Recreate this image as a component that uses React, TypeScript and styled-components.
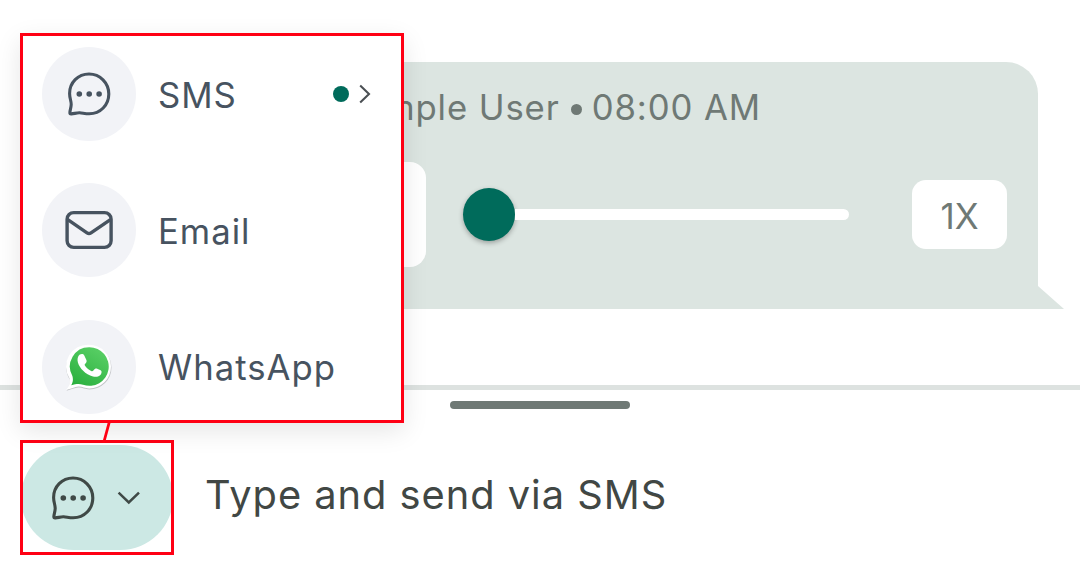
import styled, { createGlobalStyle } from "styled-components";

const colors = {
	primary: "#006b5b",
	bubble: "#dce5e1",
	muted: "#6f7975",
	text: "#3f4946",
	menuText: "#475360",
	iconBg: "#f2f3f7",
	pill: "#cce8e4",
	outline: "#ff0014",
};

const ChatIcon = ({ color }: { color: string }) => (
	<svg width="48" height="48" viewBox="0 0 48 48" fill="none">
		<path
			d="M24 4C13 4 4.6 12.6 4.6 23.5C4.6 28.3 6.3 31 6.2 34.5C6.1 37.2 5.2 39.8 4.9 42.2C4.7 43.6 5.1 44 6.4 43.9C9.4 43.6 11.8 42.7 14.6 42.8C17.8 43 20 43.8 24.2 43.8C35.4 43.8 43.8 35 43.8 24C43.8 12.8 35 4 24 4Z"
			stroke={color}
			strokeWidth="3.1"
			strokeLinejoin="round"
		/>
		<circle cx="14.3" cy="24" r="2.8" fill={color} />
		<circle cx="24.2" cy="24" r="2.8" fill={color} />
		<circle cx="34.1" cy="24" r="2.8" fill={color} />
	</svg>
);

const MailIcon = ({ color }: { color: string }) => (
	<svg width="48" height="40" viewBox="0 0 48 40" fill="none" stroke={color} strokeWidth="3.4">
		<rect x="2.1" y="2.6" width="44" height="34.8" rx="6.6" />
		<path d="M2.8 9.6L22 22.8Q24 24.2 26 22.8L45.4 9.6" strokeLinejoin="round" />
	</svg>
);

const WhatsAppIcon = () => (
	<svg width="48" height="50" viewBox="0 0 48 50">
		<defs>
			<linearGradient id="wa" x1="0.8" y1="0" x2="0.2" y2="1">
				<stop offset="0" stopColor="#5ad066" />
				<stop offset="1" stopColor="#2bb03f" />
			</linearGradient>
		</defs>
		<path
			d="M24.5 3.8A22 21.8 0 0 1 24.5 47.4C20 47.4 17 45.4 13.5 45.6C9.5 45.9 6 47.8 1.5 48.8C4.8 45 5.2 42 4.8 37.5A22 21.8 0 0 1 24.5 3.8Z"
			fill="#c3c5c8"
		/>
		<path
			d="M24.2 2.8A21.8 21.8 0 0 1 24.2 46.4C20 46.4 17 44.4 13.5 44.6C9.5 44.9 6 47 1 47.8C4.6 44.2 5 41.5 4.6 36.5A21.8 21.8 0 0 1 24.2 2.8Z"
			fill="#fff"
		/>
		<path
			d="M24.4 5.2A19.3 19.3 0 1 1 18 42.7C14.5 41.6 11 41.8 6.2 43.2C8.2 40 8.2 37 7.4 34A19.3 19.3 0 0 1 24.4 5.2Z"
			fill="url(#wa)"
		/>
		<path
			d="M14.8 12.6C16.4 11.6 18.4 11.8 19.3 13.4L21.4 18C22 19.4 21.4 20.6 20.2 21.8C19.4 22.6 19.6 23.3 20.4 24.3C22 26.4 23.9 28 26.2 29C27.2 29.4 27.8 29.2 28.6 28.2C29.7 26.8 30.8 26.1 32.2 26.7L35.6 28.3C37 29.1 36.8 31 35.8 32.4C34.2 34.6 31 35.3 28 34.4C20.4 32.2 14.6 26.2 12.9 20.4C12.1 17.6 12.6 14.2 14.8 12.6Z"
			fill="#fff"
		/>
	</svg>
);

const menuItems = [
	{ label: "SMS", icon: <ChatIcon color={colors.menuText} />, selected: true },
	{ label: "Email", icon: <MailIcon color={colors.menuText} /> },
	{ label: "WhatsApp", icon: <WhatsAppIcon /> },
];

export default function App() {
	return (
		<>
			<GlobalStyle />
			<Screen>
				<Conversation>
					<Bubble>
						<BubbleHeader>
							<span>Sample User</span>
							<Separator />
							<span>08:00 AM</span>
						</BubbleHeader>
						<Player>
							<PlayButton aria-label="Play" />
							<Slider>
								<Thumb />
								<Track />
							</Slider>
							<Speed>1X</Speed>
						</Player>
					</Bubble>
					<BubbleTail width="26" height="23" viewBox="0 0 26 23">
						<path d="M0 0L26 23H0Z" fill={colors.bubble} />
					</BubbleTail>
				</Conversation>
				<Composer>
					<Handle />
					<ComposerRow>
						<ChannelFrame>
							<ChannelPill>
								<ChatIcon color={colors.text} />
								<svg width="24" height="14" viewBox="0 0 24 14" fill="none">
									<path d="M1.6 1.6L11.8 11.4L22 1.6" stroke={colors.text} strokeWidth="2.5" />
								</svg>
							</ChannelPill>
						</ChannelFrame>
						<Placeholder>Type and send via SMS</Placeholder>
					</ComposerRow>
				</Composer>
				<Menu>
					{menuItems.map((item) => (
						<MenuItem key={item.label}>
							<IconCircle>{item.icon}</IconCircle>
							<MenuLabel>{item.label}</MenuLabel>
							{item.selected && (
								<Selected>
									<Dot />
									<svg width="12" height="20" viewBox="0 0 12 20" fill="none">
										<path d="M1.2 1.5L10 10L1.2 18.5" stroke="#4b5054" strokeWidth="2.1" />
									</svg>
								</Selected>
							)}
						</MenuItem>
					))}
				</Menu>
				<Connector width="12" height="22" viewBox="0 0 12 22">
					<path d="M7.6 0L1.6 22" stroke={colors.outline} strokeWidth="2.8" />
				</Connector>
			</Screen>
		</>
	);
}

const GlobalStyle = createGlobalStyle`
  * {
    box-sizing: border-box;
  }
  body {
    margin: 0;
    background: #fff;
    font-family: Inter, "Liberation Sans", sans-serif;
  }
  svg {
    display: block;
    flex-shrink: 0;
  }
`;

const Screen = styled.main`
  position: relative;
  display: flex;
  flex-direction: column;
  width: 1080px;
  height: 570px;
  overflow: hidden;
`;

const Conversation = styled.section`
  display: flex;
  align-items: flex-end;
  justify-content: flex-end;
  height: 309px;
  padding-right: 16px;
`;

const Bubble = styled.div`
  width: 838px;
  height: 247px;
  padding: 23px 31px 0;
  border-radius: 32px 32px 0 32px;
  background: ${colors.bubble};
`;

const BubbleTail = styled.svg`
  width: 26px;
  height: 23px;
`;

const BubbleHeader = styled.div`
  display: flex;
  align-items: center;
  justify-content: flex-end;
  height: 43px;
  padding-right: 246px;
  font-size: 34.7px;
  letter-spacing: 0.9px;
  white-space: nowrap;
  color: ${colors.muted};
`;

const Separator = styled.span`
  width: 11px;
  height: 11px;
  margin: 6px 10px 0 11px;
  border-radius: 50%;
  background: ${colors.muted};
`;

const Player = styled.div`
  display: flex;
  align-items: center;
  justify-content: flex-end;
  height: 105px;
  margin-top: 34px;
`;

const PlayButton = styled.div`
  width: 105px;
  height: 105px;
  border-radius: 16px;
  background: #fff;
`;

const Slider = styled.div`
  display: flex;
  align-items: center;
  width: 386px;
  margin: 0 63px 0 37px;
`;

const Thumb = styled.div`
  width: 52px;
  height: 53px;
  flex-shrink: 0;
  border-radius: 50%;
  background: ${colors.primary};
  box-shadow: 0 2px 5px rgba(0, 0, 0, 0.3);
`;

const Track = styled.div`
  flex: 1;
  height: 11px;
  border-radius: 0 6px 6px 0;
  background: #fff;
`;

const Speed = styled.div`
  display: flex;
  align-items: center;
  justify-content: center;
  width: 95px;
  height: 69px;
  padding-top: 2px;
  border-radius: 14px;
  background: #fff;
  color: ${colors.muted};
  font-size: 35px;
`;

const Composer = styled.section`
  display: flex;
  flex-direction: column;
  align-items: center;
  margin-top: 76px;
  padding-top: 11px;
  border-top: 5px solid #dde2e0;
`;

const Handle = styled.div`
  width: 180px;
  height: 8px;
  border-radius: 4px;
  background: ${colors.muted};
`;

const ComposerRow = styled.div`
  display: flex;
  align-items: center;
  width: 100%;
  height: 115px;
  margin-top: 31px;
  padding-left: 20px;
`;

const ChannelFrame = styled.div`
  display: flex;
  align-items: center;
  justify-content: center;
  width: 154px;
  height: 115px;
  border: 3px solid ${colors.outline};
  background: #fff;
  overflow: hidden;
`;

const ChannelPill = styled.div`
  display: flex;
  align-items: center;
  gap: 20px;
  width: 152px;
  height: 105px;
  flex-shrink: 0;
  padding-left: 28px;
  border-radius: 53px;
  background: ${colors.pill};
`;

const Placeholder = styled.span`
  padding: 0 0 7px 31px;
  font-size: 39.8px;
  letter-spacing: 0.98px;
  white-space: nowrap;
  color: #414744;
`;

const Menu = styled.div`
  position: absolute;
  top: 33px;
  left: 20px;
  display: flex;
  flex-direction: column;
  gap: 42.4px;
  width: 384px;
  height: 390px;
  padding: 11px 19px 0;
  border: 3px solid ${colors.outline};
  background: #fff;
  box-shadow: 0 8px 24px rgba(0, 0, 0, 0.1);
`;

const MenuItem = styled.div`
  display: flex;
  align-items: center;
  height: 94px;
`;

const IconCircle = styled.div`
  display: flex;
  align-items: center;
  justify-content: center;
  width: 94px;
  height: 94px;
  border-radius: 50%;
  background: ${colors.iconBg};
`;

const MenuLabel = styled.span`
  flex: 1;
  margin-left: 22px;
  padding-top: 1px;
  font-size: 34.7px;
  letter-spacing: 1px;
  color: ${colors.menuText};
`;

const Selected = styled.div`
  display: flex;
  align-items: center;
  gap: 10px;
  padding-right: 11px;
`;

const Dot = styled.span`
  width: 16px;
  height: 16px;
  border-radius: 50%;
  background: ${colors.primary};
`;

const Connector = styled.svg`
  position: absolute;
  top: 421px;
  left: 102px;
`;
